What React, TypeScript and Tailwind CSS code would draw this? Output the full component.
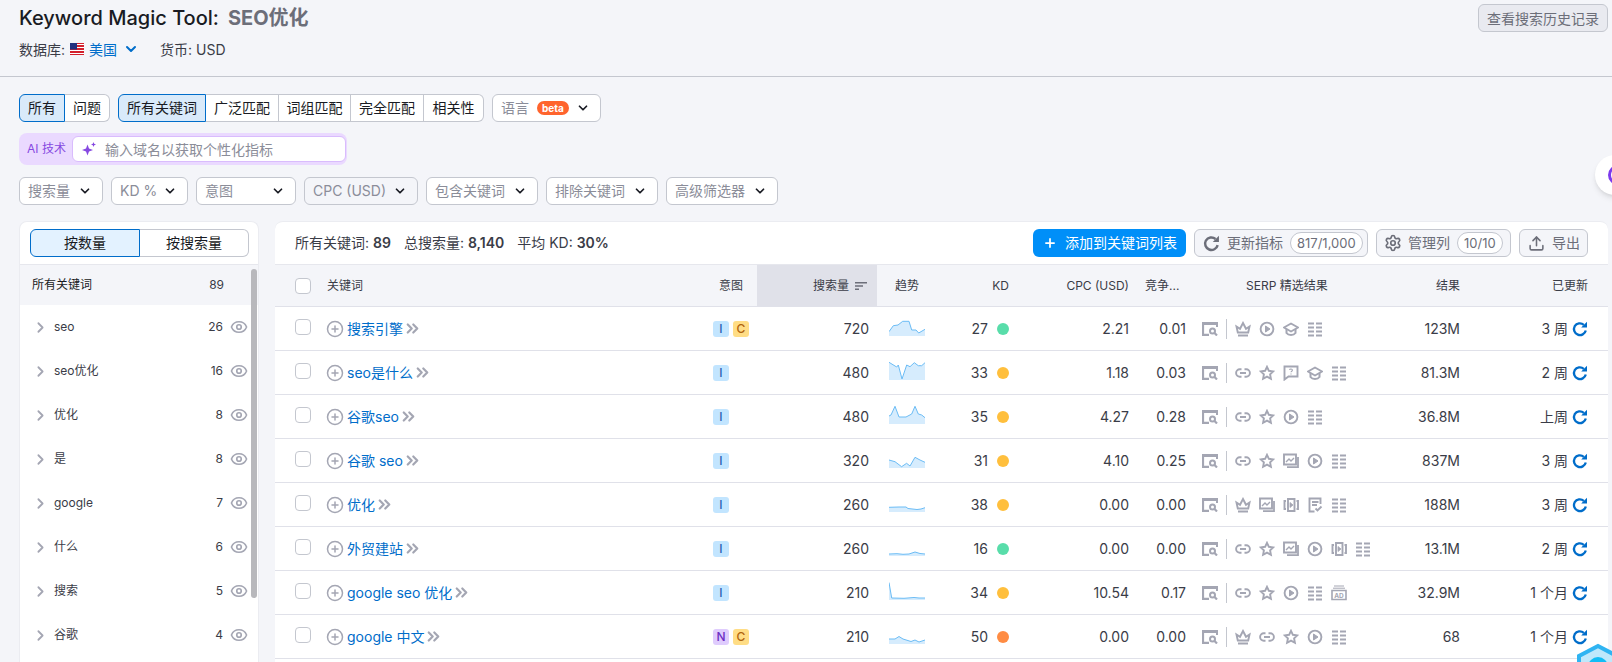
import React from 'react';
import { ChevronDown, ChevronRight, ChevronsRight, CirclePlus, Eye, Plus, Settings, Upload } from 'lucide-react';

type IconName = 'crown' | 'link' | 'star' | 'play' | 'cap' | 'list' | 'ask' | 'image' | 'video' | 'review' | 'ad';

function SerpIcon({ name }: { name: IconName }) {
  const common = { width: 16, height: 16, viewBox: '0 0 16 16', fill: 'none', stroke: '#a4a6b3', strokeWidth: 1.9 };
  if (name === 'crown')
    return (
      <svg {...common}>
        <path d="M1.500 5.500l3.500 2.300L8 2l3 5.800 3.500-2.300-1.300 6H2.800z" />
        <path d="M3 14.500h10" strokeWidth="2" />
      </svg>
    );
  if (name === 'link')
    return (
      <svg {...common}>
        <path d="M6.500 4.300H4.800a3.700 3.700 0 000 7.400h1.700M9.500 4.300h1.700a3.700 3.700 0 010 7.400H9.500M5 8h6" />
      </svg>
    );
  if (name === 'star')
    return (
      <svg {...common}>
        <path d="M8 1.800l1.900 4 4.400.6-3.200 3 .8 4.400L8 11.700l-3.900 2.100.8-4.400-3.200-3 4.400-.6z" />
      </svg>
    );
  if (name === 'play')
    return (
      <svg {...common}>
        <circle cx="8" cy="8" r="6.400" />
        <path d="M6.500 5v6L11 8z" fill="#a4a6b3" strokeWidth="1" />
      </svg>
    );
  if (name === 'cap')
    return (
      <svg {...common}>
        <path d="M1 6.500L8 2.500l7 4-7 4z" />
        <path d="M3.500 8v4c1 1.400 2.800 2 4.500 2s3.500-.6 4.500-2V8" strokeWidth="2" />
      </svg>
    );
  if (name === 'list')
    return (
      <svg {...common}>
        <path d="M1 2.500h6M9 2.500h6M1 6.500h6M9 6.500h6M1 10.500h6M9 10.500h6M1 14.500h6M9 14.500h6" strokeWidth="1.800" />
      </svg>
    );
  if (name === 'ask')
    return (
      <svg {...common}>
        <path d="M1.500 1.500h13v10H5.500l-4 3z" />
        <path d="M6.500 4.800c.2-1 2.900-1.200 2.900.4 0 1-1.400 1-1.400 2.100M8 8.600v1" strokeWidth="1.100" />
      </svg>
    );
  if (name === 'image')
    return (
      <svg {...common}>
        <path d="M1 1.500h12v10H1z" />
        <path d="M3 9l3-3 2 2 3-3" strokeWidth="1.400" />
        <path d="M15 4v10.200H4" strokeWidth="1.800" />
      </svg>
    );
  if (name === 'video')
    return (
      <svg {...common}>
        <path d="M5 2h6.500v12H5z" />
        <path d="M3 4H1.500v8H3M13.500 4H15v8h-1.500" />
        <path d="M7 5.500v5L10 8z" fill="#a4a6b3" strokeWidth="0.800" />
      </svg>
    );
  if (name === 'review')
    return (
      <svg {...common}>
        <path d="M13.500 7V1.500h-11v13h5" />
        <path d="M5 5h6.500M5 8h5M8.500 11.500l2 2 4-4" />
      </svg>
    );
  return (
    <svg {...common}>
      <path d="M3 1h10M2 3.200h12" strokeWidth="1" />
      <path d="M1 5.500h14v9H1z" strokeWidth="1.600" />
      <text x="8" y="12.600" textAnchor="middle" fontSize="6.500" fontWeight="700" fill="#a4a6b3" stroke="none">
        AD
      </text>
    </svg>
  );
}

function PageSearch() {
  return (
    <svg width="16" height="14" viewBox="0 0 16 14" fill="none" stroke="#a4a6b3">
      <path d="M0 1.500h15.500v3.500" strokeWidth="3" />
      <path d="M1 1v11.800h6" strokeWidth="2.200" />
      <circle cx="10.500" cy="9" r="2.500" strokeWidth="2" />
      <path d="M12.300 10.800l2.700 2.700" strokeWidth="2.200" />
    </svg>
  );
}

function Refresh() {
  return (
    <svg width="16" height="16" viewBox="0 0 16 16" fill="none" className="shrink-0">
      <path d="M13.800 9.500A6 6 0 112.700 5.200 6 6 0 0111.800 3.800" stroke="#006dca" strokeWidth="2.300" />
      <path d="M15 .8v5.800H9.200z" fill="#006dca" />
    </svg>
  );
}

function Spark({ pts }: { pts: string }) {
  const coords = pts.trim().split(' ');
  const area = `M${coords.join(' L')} L36,18 L0,18 Z`;
  return (
    <svg width="36" height="18" viewBox="0 0 36 18" fill="none">
      <path d={area} fill="#d6ecfd" />
      <path d={`M${coords.join(' L')}`} stroke="#6bbcf5" strokeWidth="1" />
    </svg>
  );
}

function Caret({ className = 'text-[#191b23]' }: { className?: string }) {
  return <ChevronDown size={14} strokeWidth={3} className={`shrink-0 ${className}`} />;
}

function Filter({ label, w, gray }: { label: string; w: string; gray?: boolean }) {
  return (
    <button className={`h-[28px] ${w} flex items-center justify-between pl-[8px] pr-[10px] rounded-md border border-[#c4c7cf] text-sm text-[#8b8d99] ${gray ? 'bg-[#f4f5f9]' : 'bg-white'}`}>
      {label}
      <Caret />
    </button>
  );
}

function Seg({ label, w, active, first, last }: { label: string; w: string; active?: boolean; first?: boolean; last?: boolean }) {
  return (
    <button
      className={`h-[28px] ${w} text-sm text-[#191b23] border-y border-r ${first ? 'border-l rounded-l-md' : ''} ${last ? 'rounded-r-md' : ''} ${
        active ? 'bg-[#d9eafa] border-[#006dca]' : 'bg-white border-[#c4c7cf]'
      }`}
    >
      {label}
    </button>
  );
}

const topics: [string, number][] = [
  ['seo', 26],
  ['seo优化', 16],
  ['优化', 8],
  ['是', 8],
  ['google', 7],
  ['什么', 6],
  ['搜索', 5],
  ['谷歌', 4],
];

type Row = {
  name: string;
  intent: string[];
  vol: string;
  spark: string;
  kd: number;
  dot: string;
  cpc: string;
  com: string;
  serp: IconName[];
  results: string;
  updated: string;
};

const GREEN = 'bg-[#59ddaa]';
const YELLOW = 'bg-[#ffbf3d]';
const ORANGE = 'bg-[#ff8c43]';

const rows: Row[] = [
  { name: '搜索引擎', intent: ['I', 'C'], vol: '720', spark: '0,13.700 4.300,7.700 9,7 13.700,3.300 20,3.300 22.700,12 27,12 29.700,15 36,11.300', kd: 27, dot: GREEN, cpc: '2.21', com: '0.01', serp: ['crown', 'play', 'cap', 'list'], results: '123M', updated: '3 周' },
  { name: 'seo是什么', intent: ['I'], vol: '480', spark: '0,0.300 7.700,5 9.300,3 13,17 17.700,3 21,4.700 25.300,0.700 29.300,3.700 32.700,3.700 36,0.700', kd: 33, dot: YELLOW, cpc: '1.18', com: '0.03', serp: ['link', 'star', 'ask', 'cap', 'list'], results: '81.3M', updated: '2 周' },
  { name: '谷歌seo', intent: ['I'], vol: '480', spark: '0,10 2,9 6,0.300 10,11 17,11 22.700,8 26,0.300 29.300,8 32.700,9 36,11.700', kd: 35, dot: YELLOW, cpc: '4.27', com: '0.28', serp: ['link', 'star', 'play', 'list'], results: '36.8M', updated: '上周' },
  { name: '谷歌 seo', intent: ['I'], vol: '320', spark: '0,10 6,11.700 12.600,16.700 17.600,13.300 21,16 26,7.300 31,10 36,12.300', kd: 31, dot: YELLOW, cpc: '4.10', com: '0.25', serp: ['link', 'star', 'image', 'play', 'list'], results: '837M', updated: '3 周' },
  { name: '优化', intent: ['I'], vol: '260', spark: '0,13.300 10,13 17,13 19,14.500 28,15.500 32,15 36,13.700', kd: 38, dot: YELLOW, cpc: '0.00', com: '0.00', serp: ['crown', 'image', 'video', 'review', 'list'], results: '188M', updated: '3 周' },
  { name: '外贸建站', intent: ['I'], vol: '260', spark: '0,16 8,15.700 14,16.300 20,16 26,14 31,15.500 36,16', kd: 16, dot: GREEN, cpc: '0.00', com: '0.00', serp: ['link', 'star', 'image', 'play', 'video', 'list'], results: '13.1M', updated: '2 周' },
  { name: 'google seo 优化', intent: ['I'], vol: '210', spark: '0,0.500 2.700,16 15,16.300 25,15.500 30,16 36,16', kd: 34, dot: YELLOW, cpc: '10.54', com: '0.17', serp: ['link', 'star', 'play', 'list', 'ad'], results: '32.9M', updated: '1 个月' },
  { name: 'google 中文', intent: ['N', 'C'], vol: '210', spark: '0,13 6,13 10,10.500 14,13 22,15.500 26,14 30,16 36,14', kd: 50, dot: ORANGE, cpc: '0.00', com: '0.00', serp: ['crown', 'link', 'star', 'play', 'list'], results: '68', updated: '1 个月' },
];

const badgeStyle: Record<string, string> = {
  I: 'bg-[#c2e5ff] text-[#2b5fb3]',
  C: 'bg-[#ffdd85] text-[#b0640e]',
  N: 'bg-[#dfccfd] text-[#6d2fc4]',
};

const cols = 'grid grid-cols-[52px_378px_52px_120px_58px_74px_120px_57px_204px_70px_128px_20px]';

export default function App() {
  return (
    <div className="relative flex h-[662px] w-[1612px] flex-col overflow-hidden bg-[#f4f5f9] font-['Inter','Noto_Sans_CJK_SC',sans-serif] text-[#191b23]">
      <header className="h-[77px] shrink-0 border-b border-[#c4c7cf] pl-[19px] pr-[4px]">
        <div className="flex items-start justify-between pt-[4px]">
          <h1 className="text-[20px] leading-[28px] font-medium">
            Keyword Magic Tool:
            <span className="ml-[9px] font-bold text-[#6c6e79]">SEO优化</span>
          </h1>
          <button className="h-[28px] w-[130px] rounded-md border border-[#c4c7cf] bg-[#e9eaf0] text-[14px] text-[#6c6e79]">查看搜索历史记录</button>
        </div>
        <div className="mt-[7px] flex h-[20px] items-center text-[14px] text-[#3a3c47]">
          <span>数据库:</span>
          <svg width="14" height="12" viewBox="0 0 14 12" className="ml-[5px]">
            <rect width="14" height="12" fill="#d3202c" />
            <path d="M0 1.500h14M0 4.500h14M0 7.500h14M0 10.500h14" stroke="#fff" strokeWidth="1" />
            <rect width="7" height="6.500" fill="#22307f" />
          </svg>
          <span className="ml-[5px] text-[#006dca]">美国</span>
          <ChevronDown size={16} strokeWidth={3} className="ml-[6px] text-[#006dca]" />
          <span className="ml-[21px]">货币: USD</span>
        </div>
      </header>

      <div className="flex min-h-0 flex-1 flex-col pt-[17px] pl-[19px] pr-[4px]">
        <div className="flex items-center">
          <Seg label="所有" w="w-[46px]" active first />
          <Seg label="问题" w="w-[45px]" last />
          <div className="w-[8px]" />
          <Seg label="所有关键词" w="w-[88px]" active first />
          <Seg label="广泛匹配" w="w-[73px]" />
          <Seg label="词组匹配" w="w-[72px]" />
          <Seg label="完全匹配" w="w-[73px]" />
          <Seg label="相关性" w="w-[60px]" last />
          <button className="ml-[8px] flex h-[28px] w-[109px] items-center rounded-md border border-[#c4c7cf] bg-white pl-[8px] pr-[10px] text-sm text-[#8b8d99]">
            语言
            <span className="ml-[8px] rounded-full bg-[#ff642d] px-[5px] text-[10px] leading-[14px] font-bold text-white">beta</span>
            <span className="flex-1" />
            <Caret />
          </button>
        </div>

        <div className="mt-[11px] flex h-[32px] w-[328px] items-center rounded-lg bg-[#ead9ff] py-[3px] pr-[1px] pl-[8px]">
          <span className="w-[45px] text-[12px] text-[#8649e1]">AI 技术</span>
          <div className="flex h-[26px] flex-1 items-center rounded-md border border-[#d9bcfd] bg-white pl-[8px] text-[14px] text-[#8b8d99]">
            <svg width="16" height="16" viewBox="0 0 16 16" fill="#8649e1" className="mr-[8px]">
              <path d="M6.500 3.500l1.500 4 4 1.500-4 1.500-1.500 4-1.500-4-4-1.500 4-1.500z" />
              <path d="M12.500 1l.7 1.800 1.800.7-1.800.7-.7 1.800-.7-1.800-1.800-.7 1.800-.7z" />
            </svg>
            输入域名以获取个性化指标
          </div>
        </div>

        <div className="mt-[12px] flex gap-[8px]">
          <Filter label="搜索量" w="w-[84px]" />
          <Filter label="KD %" w="w-[77px]" />
          <Filter label="意图" w="w-[100px]" />
          <Filter label="CPC (USD)" w="w-[114px]" gray />
          <Filter label="包含关键词" w="w-[112px]" />
          <Filter label="排除关键词" w="w-[112px]" />
          <Filter label="高级筛选器" w="w-[112px]" />
        </div>

        <div className="mt-[16px] flex min-h-0 flex-1 gap-[16px]">
          <aside className="w-[240px] shrink-0 rounded-t-lg border border-b-0 border-[#ebecf1] bg-white">
            <div className="flex h-[43px] items-start border-b border-[#e6e7ed] pt-[7px] pl-[10px]">
              <button className="h-[28px] w-[110px] rounded-l-md border border-[#006dca] bg-[#e3f2ff] text-sm">按数量</button>
              <button className="h-[28px] w-[109px] rounded-r-md border border-l-0 border-[#c4c7cf] bg-white text-sm">按搜索量</button>
            </div>
            <div className="relative">
              <div className="flex h-[40px] items-center bg-[#f4f5f9] pr-[34px] pl-[12px] text-[12px]">
                <span className="flex-1">所有关键词</span>
                <span className="text-[#3a3c47]">89</span>
              </div>
              {topics.map(([t, n]) => (
                <div key={t} className="flex h-[44px] items-center pr-[10px] pl-[12px] text-[12px] text-[#3a3c47]">
                  <ChevronRight size={17} strokeWidth={2.5} className="text-[#a4a6b3]" />
                  <span className="ml-[5px] flex-1">{t}</span>
                  <span>{n}</span>
                  <Eye size={18} strokeWidth={2.2} className="ml-[7px] text-[#a4a6b3]" />
                </div>
              ))}
              <div className="absolute top-[4px] right-[1px] h-[329px] w-[6px] rounded-full bg-[#b8b8bc]" />
            </div>
          </aside>

          <main className="min-w-0 flex-1 rounded-t-lg border-t border-[#ebecf1] bg-white">
            <div className="flex h-[43px] items-center justify-between border-b border-[#e6e7ed] pr-[20px] pl-[20px] text-sm text-[#3a3c47]">
              <div className="flex gap-[13px]">
                <span>
                  所有关键词: <b className="font-semibold text-[#3a3c47]">89</b>
                </span>
                <span>
                  总搜索量: <b className="font-semibold text-[#3a3c47]">8,140</b>
                </span>
                <span>
                  平均 KD: <b className="font-semibold text-[#3a3c47]">30%</b>
                </span>
              </div>
              <div className="flex gap-[8px]">
                <button className="flex h-[28px] w-[153px] items-center rounded-md bg-[#008ff8] pl-[10px] text-white">
                  <Plus size={14} strokeWidth={3} />
                  <span className="ml-[8px]">添加到关键词列表</span>
                </button>
                <button className="flex h-[28px] w-[174px] items-center rounded-md border border-[#c4c7cf] bg-[#f4f5f9] pl-[8px] text-[#6c6e79]">
                  <svg width="17" height="17" viewBox="0 0 16 16" fill="none">
                    <path d="M13.800 9.500A6 6 0 112.700 5.200 6 6 0 0111.800 3.800" stroke="#6c6e79" strokeWidth="2.300" />
                    <path d="M15 .8v5.800H9.200z" fill="#6c6e79" />
                  </svg>
                  <span className="ml-[7px]">更新指标</span>
                  <span className="ml-[7px] rounded-full border border-[#c4c7cf] bg-white px-[6px] text-[13px] leading-[20px]">817/1,000</span>
                </button>
                <button className="flex h-[28px] w-[135px] items-center rounded-md border border-[#c4c7cf] bg-[#f4f5f9] pl-[7px] text-[#6c6e79]">
                  <Settings size={18} strokeWidth={2.2} />
                  <span className="ml-[6px]">管理列</span>
                  <span className="ml-[7px] rounded-full border border-[#c4c7cf] bg-white px-[6px] text-[13px] leading-[20px]">10/10</span>
                </button>
                <button className="flex h-[28px] w-[69px] items-center rounded-md border border-[#c4c7cf] bg-[#f4f5f9] pl-[8px] text-[#6c6e79]">
                  <Upload size={17} strokeWidth={2.2} />
                  <span className="ml-[7px]">导出</span>
                </button>
              </div>
            </div>

            <div className={`${cols} h-[42px] items-center border-b border-[#e0e1e9] bg-[#f4f5f9] text-[12px] text-[#3a3c47]`}>
              <div className="pl-[20px]">
                <div className="h-[16px] w-[16px] rounded-[4px] border border-[#c4c7cf] bg-white" />
              </div>
              <div>关键词</div>
              <div className="pr-[14px] text-right">意图</div>
              <div className="flex h-full items-center justify-end gap-[6px] bg-[#e0e1e9] pr-[10px]">
                搜索量
                <svg width="12" height="10" viewBox="0 0 12 10" fill="#6c6e79">
                  <path d="M0 1h12v1.400H0zM0 4.300h8v1.400H0zM0 7.600h4V9H0z" />
                </svg>
              </div>
              <div className="pl-[18px]">趋势</div>
              <div className="text-right">KD</div>
              <div className="text-right">CPC (USD)</div>
              <div className="pl-[16px]">竞争...</div>
              <div className="pl-[60px]">SERP 精选结果</div>
              <div className="text-right">结果</div>
              <div className="text-right">已更新</div>
              <div />
            </div>

            {rows.map((r) => (
              <div key={r.name} className={`${cols} h-[44px] items-center border-b border-[#e0e1e9] text-[14px] text-[#3a3c47]`}>
                <div className="pb-[4px] pl-[20px]">
                  <div className="h-[16px] w-[16px] rounded-[4px] border border-[#c4c7cf] bg-white" />
                </div>
                <div className="flex items-center">
                  <CirclePlus size={18} strokeWidth={2} className="-ml-[1px] text-[#a4a6b3]" />
                  <a className="ml-[3px] text-[#006dca]">{r.name}</a>
                  <ChevronsRight size={19} strokeWidth={2.8} className="text-[#a4a6b3]" />
                </div>
                <div className="flex gap-[4px] pl-[8px]">
                  {r.intent.map((b) => (
                    <span key={b} className={`flex h-[16px] w-[16px] items-center justify-center rounded-[3px] text-[12px] font-medium ${badgeStyle[b]}`}>
                      {b}
                    </span>
                  ))}
                </div>
                <div className="pr-[8px] text-right">{r.vol}</div>
                <div className="pl-[12px]">
                  <div className="pb-[4px]">
                    <Spark pts={r.spark} />
                  </div>
                </div>
                <div className="flex items-center justify-end gap-[9px]">
                  {r.kd}
                  <span className={`h-[12px] w-[12px] rounded-full ${r.dot}`} />
                </div>
                <div className="text-right">{r.cpc}</div>
                <div className="text-right">{r.com}</div>
                <div className="flex items-center pl-[16px]">
                  <PageSearch />
                  <div className="mr-[8px] ml-[8px] h-[20px] w-px bg-[#c4c7cf]" />
                  <div className="flex gap-[8px]">
                    {r.serp.map((s, i) => (
                      <SerpIcon key={i} name={s} />
                    ))}
                  </div>
                </div>
                <div className="text-right">{r.results}</div>
                <div className="flex items-center justify-end gap-[4px]">
                  {r.updated}
                  <Refresh />
                </div>
                <div />
              </div>
            ))}
          </main>
        </div>
      </div>

      {/* floating helpers at the screen edge */}
      <div className="absolute top-[155px] left-[1595px] flex h-[40px] w-[40px] items-center rounded-full bg-white pl-[13px] shadow-md">
        <div className="h-[20px] w-[20px] shrink-0 rounded-full border-[3px] border-[#7c3aed]" />
      </div>
      <svg width="50" height="40" viewBox="0 0 50 40" className="absolute top-[643px] left-[1574px]">
        <path d="M24 3l19 10v22L24 46 5 35V13z" fill="#bfe8fb" stroke="#2fb4f2" strokeWidth="4" />
        <circle cx="24" cy="24" r="10" fill="#12bdf5" />
      </svg>
    </div>
  );
}
